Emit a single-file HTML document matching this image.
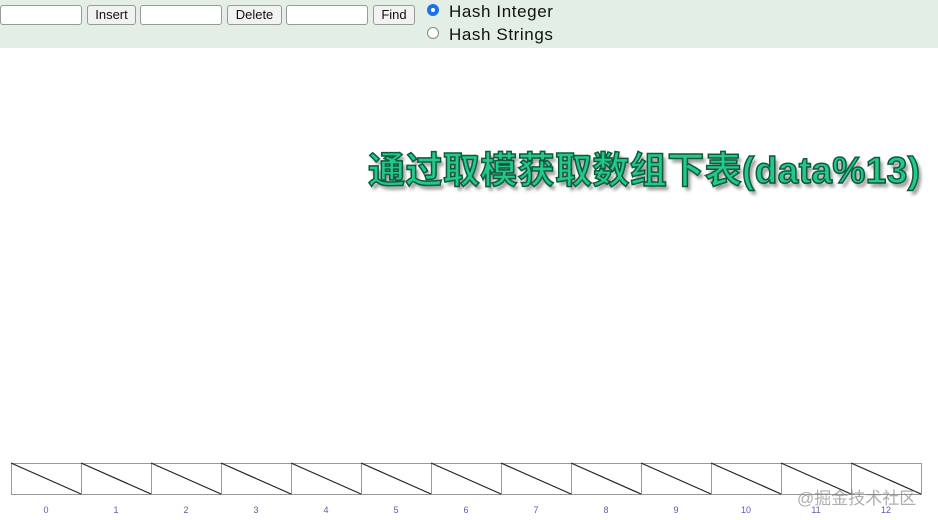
<!DOCTYPE html>
<html><head><meta charset="utf-8"><style>
body{margin:0;width:938px;height:520px;background:#fff;position:relative;overflow:hidden;font-family:"Liberation Sans",sans-serif}
.hdr{position:absolute;left:0;top:0;width:938px;height:48px;background:#e3eee4}
.in{position:absolute;top:5px;height:20px;width:82px;box-sizing:border-box;border:1px solid #999;border-radius:3px;background:#fff}
.bt{position:absolute;top:5px;height:20px;box-sizing:border-box;border:1px solid #999;border-radius:3px;background:#f2f2f2;font-size:13px;line-height:18px;text-align:center;color:#111}
.rd{position:absolute;left:427px;width:12px;height:12px;border-radius:50%;box-sizing:border-box;border:1px solid #888;background:#fff}
.lb{position:absolute;left:449px;font-size:17px;color:#111;letter-spacing:0.6px}
.title{position:absolute;left:368px;top:140px;font-size:37px;font-weight:bold;color:#22c98b;font-family:"Liberation Sans","Noto Sans CJK SC",sans-serif;white-space:nowrap;-webkit-text-stroke:1.5px #0d5a3c;text-shadow:3px 4px 3px #999;letter-spacing:0.4px}
.wm{position:absolute;left:797px;top:484px;font-size:17px;color:rgba(120,120,120,.6);font-family:"Liberation Sans","Noto Sans CJK SC",sans-serif}
</style></head><body>
<div class="hdr">
<div class="in" style="left:0"></div><div class="bt" style="left:87px;width:49px">Insert</div>
<div class="in" style="left:140px"></div><div class="bt" style="left:227px;width:55px">Delete</div>
<div class="in" style="left:286px"></div><div class="bt" style="left:373px;width:42px">Find</div>
<div class="rd" style="top:4px;border:4px solid #1a73e8"></div><div class="lb" style="top:2px">Hash Integer</div>
<div class="rd" style="top:27px"></div><div class="lb" style="top:25px">Hash Strings</div>
</div>
<div class="title">通过取模获取数组下表(data%13)</div>
<svg style="position:absolute;left:0;top:0" width="938" height="520">
<g stroke="#999" fill="none"><rect x="11.5" y="463.5" width="910" height="31"/></g>
<g stroke="#999"><line x1="81.5" y1="463" x2="81.5" y2="495"/><line x1="151.5" y1="463" x2="151.5" y2="495"/><line x1="221.5" y1="463" x2="221.5" y2="495"/><line x1="291.5" y1="463" x2="291.5" y2="495"/><line x1="361.5" y1="463" x2="361.5" y2="495"/><line x1="431.5" y1="463" x2="431.5" y2="495"/><line x1="501.5" y1="463" x2="501.5" y2="495"/><line x1="571.5" y1="463" x2="571.5" y2="495"/><line x1="641.5" y1="463" x2="641.5" y2="495"/><line x1="711.5" y1="463" x2="711.5" y2="495"/><line x1="781.5" y1="463" x2="781.5" y2="495"/><line x1="851.5" y1="463" x2="851.5" y2="495"/></g>
<g stroke="#222" stroke-width="1.2"><line x1="11" y1="463" x2="81" y2="494"/><line x1="81" y1="463" x2="151" y2="494"/><line x1="151" y1="463" x2="221" y2="494"/><line x1="221" y1="463" x2="291" y2="494"/><line x1="291" y1="463" x2="361" y2="494"/><line x1="361" y1="463" x2="431" y2="494"/><line x1="431" y1="463" x2="501" y2="494"/><line x1="501" y1="463" x2="571" y2="494"/><line x1="571" y1="463" x2="641" y2="494"/><line x1="641" y1="463" x2="711" y2="494"/><line x1="711" y1="463" x2="781" y2="494"/><line x1="781" y1="463" x2="851" y2="494"/><line x1="851" y1="463" x2="921" y2="494"/></g>
<g fill="#5a5ab0" font-size="9" font-family="Liberation Sans" text-anchor="middle"><text x="46" y="513">0</text><text x="116" y="513">1</text><text x="186" y="513">2</text><text x="256" y="513">3</text><text x="326" y="513">4</text><text x="396" y="513">5</text><text x="466" y="513">6</text><text x="536" y="513">7</text><text x="606" y="513">8</text><text x="676" y="513">9</text><text x="746" y="513">10</text><text x="816" y="513">11</text><text x="886" y="513">12</text></g>
</svg>
<div class="wm">@掘金技术社区</div>
</body></html>
